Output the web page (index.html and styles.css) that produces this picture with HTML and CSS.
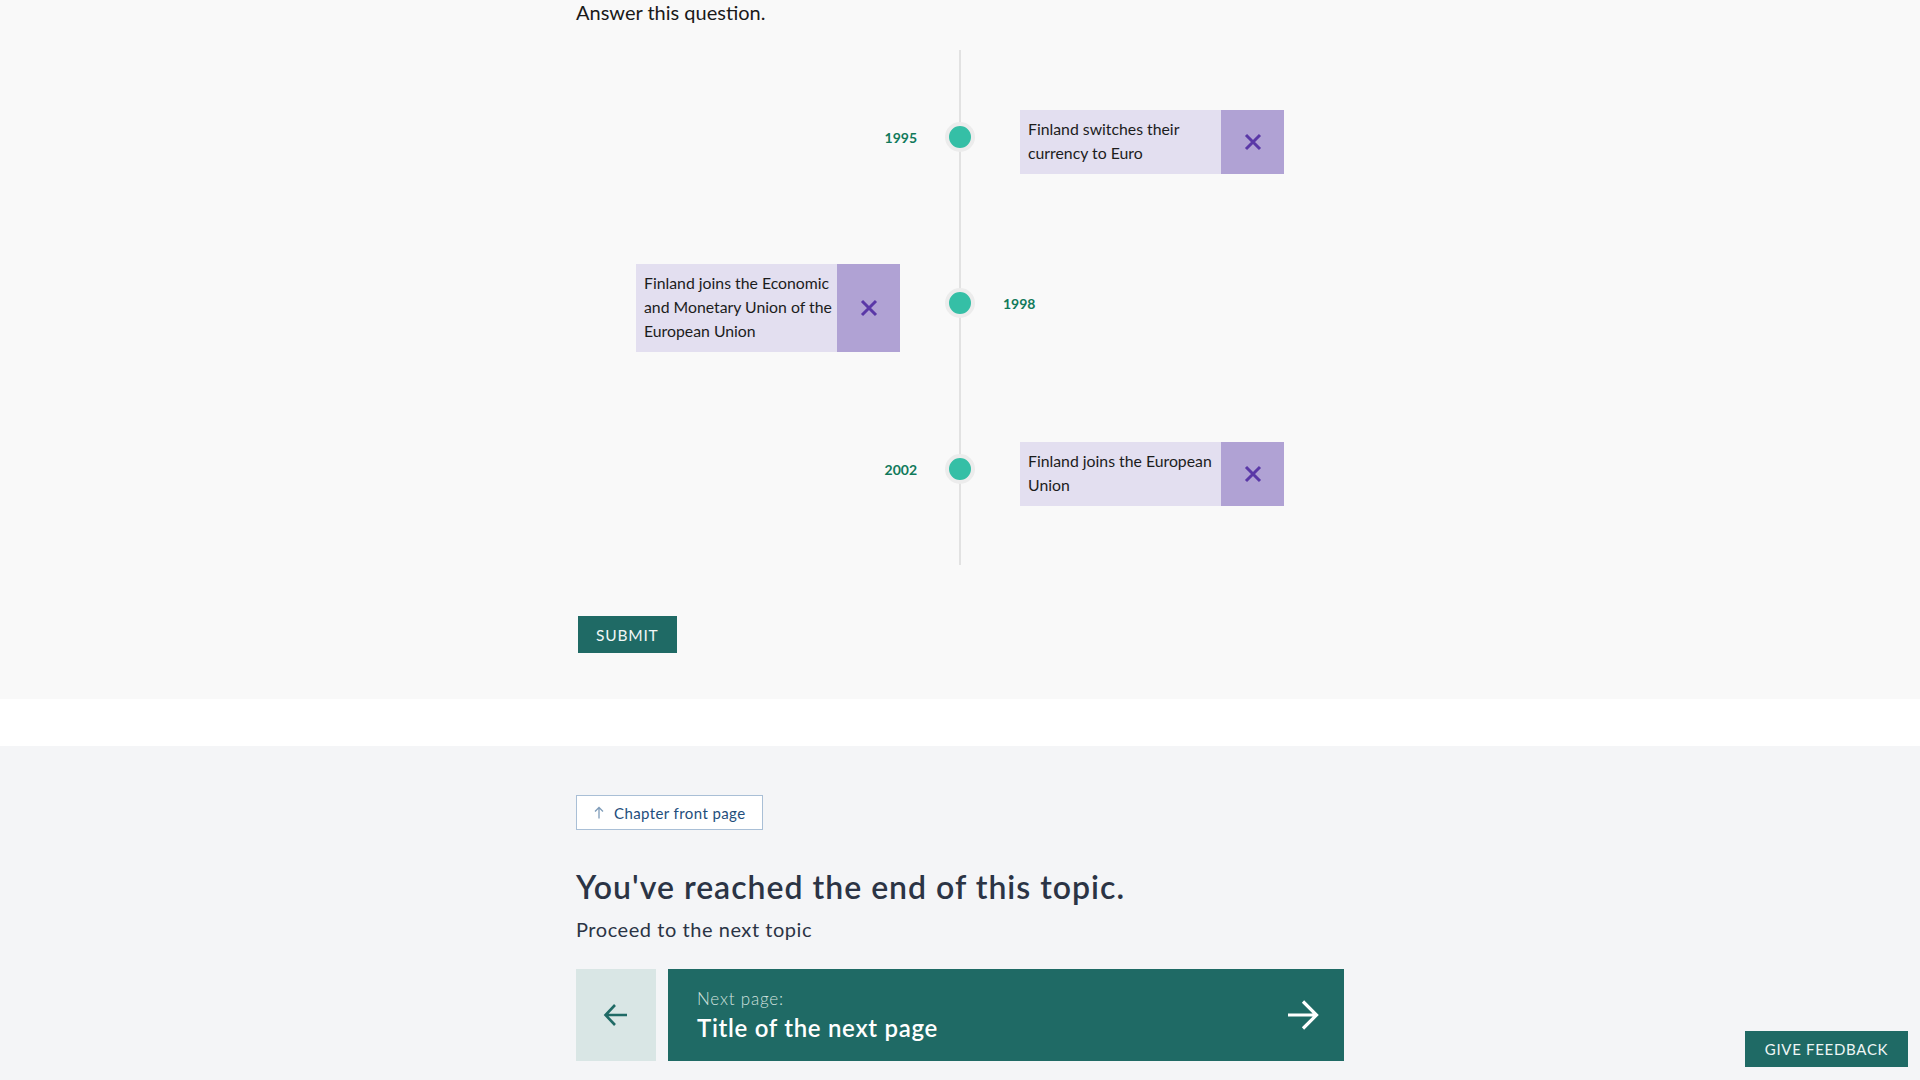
FILE: index.html
```html
<!DOCTYPE html>
<html lang="en">
<head>
<meta charset="utf-8">
<title>Timeline exercise</title>
<link rel="stylesheet" href="styles.css">
</head>
<body>
<main class="page">
  <section class="exercise">
    <div class="container">
      <p class="prompt">Answer this question.</p>
      <div class="timeline">
        <div class="row row-right">
          <span class="year">1995</span>
          <span class="dot"></span>
          <div class="card">
            <span class="card-text">Finland switches their currency to Euro</span>
            <button class="card-close" aria-label="Remove">
              <svg width="18" height="18" viewBox="0 0 18 18"><path d="M2 2 L16 16 M16 2 L2 16" stroke="currentColor" stroke-width="3" fill="none"/></svg>
            </button>
          </div>
        </div>
        <div class="row row-left">
          <div class="card">
            <span class="card-text">Finland joins the Economic and Monetary Union of the European Union</span>
            <button class="card-close" aria-label="Remove">
              <svg width="18" height="18" viewBox="0 0 18 18"><path d="M2 2 L16 16 M16 2 L2 16" stroke="currentColor" stroke-width="3" fill="none"/></svg>
            </button>
          </div>
          <span class="dot"></span>
          <span class="year">1998</span>
        </div>
        <div class="row row-right">
          <span class="year">2002</span>
          <span class="dot"></span>
          <div class="card">
            <span class="card-text">Finland joins the European Union</span>
            <button class="card-close" aria-label="Remove">
              <svg width="18" height="18" viewBox="0 0 18 18"><path d="M2 2 L16 16 M16 2 L2 16" stroke="currentColor" stroke-width="3" fill="none"/></svg>
            </button>
          </div>
        </div>
      </div>
      <button class="submit">SUBMIT</button>
    </div>
  </section>

  <div class="spacer"></div>

  <section class="end">
    <div class="container">
      <a class="chapter-link" href="#">
        <svg width="10" height="13" viewBox="0 0 10 13"><path d="M5 12.5 V1.5 M1 5.5 L5 1.5 L9 5.5" stroke="currentColor" stroke-width="1.3" fill="none"/></svg>
        <span>Chapter front page</span>
      </a>
      <h2 class="end-title">You've reached the end of this topic.</h2>
      <p class="end-sub">Proceed to the next topic</p>
      <nav class="pager">
        <a class="prev" href="#" aria-label="Previous page">
          <svg width="28" height="28" viewBox="0 0 28 28"><path d="M25 14 H4 M13 4 L3.5 14 L13 24" stroke="currentColor" stroke-width="2.6" fill="none"/></svg>
        </a>
        <a class="next" href="#">
          <span class="next-text">
            <span class="next-label">Next page:</span>
            <span class="next-title">Title of the next page</span>
          </span>
          <svg width="34" height="30" viewBox="0 0 34 30"><path d="M2 15 H31 M17 1.5 L30.5 15 L17 28.5" stroke="currentColor" stroke-width="3.2" fill="none"/></svg>
        </a>
      </nav>
    </div>
  </section>

  <button class="feedback">GIVE FEEDBACK</button>
</main>
</body>
</html>
```

FILE: styles.css
```css
* {
  box-sizing: border-box;
}

html, body {
  margin: 0;
  padding: 0;
}

body {
  font-family: Lato, "Liberation Sans", sans-serif;
  color: #1b1b1b;
  background: #f4f5f7;
}

.page {
  min-height: 1080px;
  display: flex;
  flex-direction: column;
}

.container {
  width: 768px;
  margin: 0 auto;
}

/* ---------- exercise ---------- */
.exercise {
  background: #f9f9f9;
  padding-bottom: 46px;
}

.prompt {
  margin: 0;
  font-size: 20px;
  line-height: 25px;
  color: #1a1a1a;
}

.timeline {
  position: relative;
  margin-top: 25px;
  height: 515px;
  padding: 9px 0 8px;
}

.timeline::before {
  content: "";
  position: absolute;
  top: 0;
  bottom: 0;
  left: 383px;
  width: 2px;
  background: #e2e2e2;
}

.row {
  position: relative;
  height: 166px;
  display: grid;
  grid-template-columns: 324px 45px 30px 45px 324px;
  align-items: center;
}

.dot {
  grid-column: 3;
  grid-row: 1;
  width: 30px;
  height: 30px;
  border-radius: 50%;
  background: #35bfa6;
  border: 4px solid #ececec;
  margin-bottom: 10px;
}

.year {
  grid-row: 1;
  font-size: 14px;
  font-weight: 700;
  color: #117a5b;
  margin-bottom: 10px;
}

.row-right .year {
  grid-column: 1 / 3;
  justify-self: end;
  margin-right: 28px;
}

.row-left .year {
  grid-column: 4 / 6;
  justify-self: start;
  margin-left: 28px;
}

.card {
  grid-row: 1;
  width: 264px;
  display: flex;
  background: #e3dff0;
}

.row-right .card {
  grid-column: 5;
  justify-self: start;
}

.row-left .card {
  grid-column: 1;
  justify-self: end;
}

.card-text {
  flex: 1;
  padding: 7px 4px 9px 8px;
  font-size: 15.8px;
  line-height: 24px;
  color: #1c1c1c;
}

.card-close {
  width: 63px;
  flex: none;
  border: 0;
  padding: 0;
  background: #b0a2d4;
  color: #5a38a7;
  display: flex;
  align-items: center;
  justify-content: center;
}

.submit {
  margin-top: 51px;
  margin-left: 2px;
  height: 37px;
  padding: 0 18px;
  border: 0;
  background: #1f6a65;
  color: #f1f7f6;
  font-family: Lato, "Liberation Sans", sans-serif;
  font-size: 15.5px;
  letter-spacing: 0.8px;
}

/* ---------- spacer ---------- */
.spacer {
  height: 47px;
  background: #ffffff;
}

/* ---------- end of topic ---------- */
.end {
  flex: 1;
  background: #f4f5f7;
  padding-top: 49px;
  padding-bottom: 40px;
}

.chapter-link {
  display: inline-flex;
  align-items: center;
  gap: 10px;
  height: 35px;
  padding: 0 17px;
  background: #ffffff;
  border: 1px solid #a9bfd6;
  color: #1e4e7c;
  text-decoration: none;
  font-family: Lato, "Liberation Sans", sans-serif;
  font-size: 15px;
  letter-spacing: 0.4px;
}

.chapter-link svg {
  color: #7f9cb9;
}

.end-title {
  margin: 38px 0 0;
  font-family: Lato, "Liberation Sans", sans-serif;
  font-size: 32px;
  line-height: 38px;
  font-weight: 600;
  color: #2b3445;
  letter-spacing: 1px;
}

.end-sub {
  margin: 12px 0 0;
  font-size: 20px;
  line-height: 23px;
  color: #2b3445;
  letter-spacing: 0.55px;
}

.pager {
  margin-top: 28px;
  display: flex;
  gap: 12px;
  height: 92px;
}

.prev {
  width: 80px;
  flex: none;
  background: #d9e6e5;
  color: #1f6a65;
  display: flex;
  align-items: center;
  justify-content: center;
}

.next {
  flex: 1;
  background: #1f6a65;
  color: #ffffff;
  text-decoration: none;
  display: flex;
  align-items: center;
  justify-content: space-between;
  padding: 0 24px 0 29px;
}

.next-text {
  display: flex;
  flex-direction: column;
  gap: 4px;
}

.next-label {
  font-size: 17px;
  line-height: 20px;
  font-weight: 300;
  color: #cfe0de;
  letter-spacing: 0.8px;
}

.next-title {
  font-size: 24px;
  line-height: 29px;
  font-weight: 600;
  letter-spacing: 0.7px;
}

/* ---------- feedback ---------- */
.feedback {
  position: fixed;
  right: 12px;
  bottom: 13px;
  width: 163px;
  height: 36px;
  border: 0;
  background: #1f6a65;
  color: #eef6f5;
  font-family: Lato, "Liberation Sans", sans-serif;
  font-size: 15px;
  letter-spacing: 0.7px;
}
```
